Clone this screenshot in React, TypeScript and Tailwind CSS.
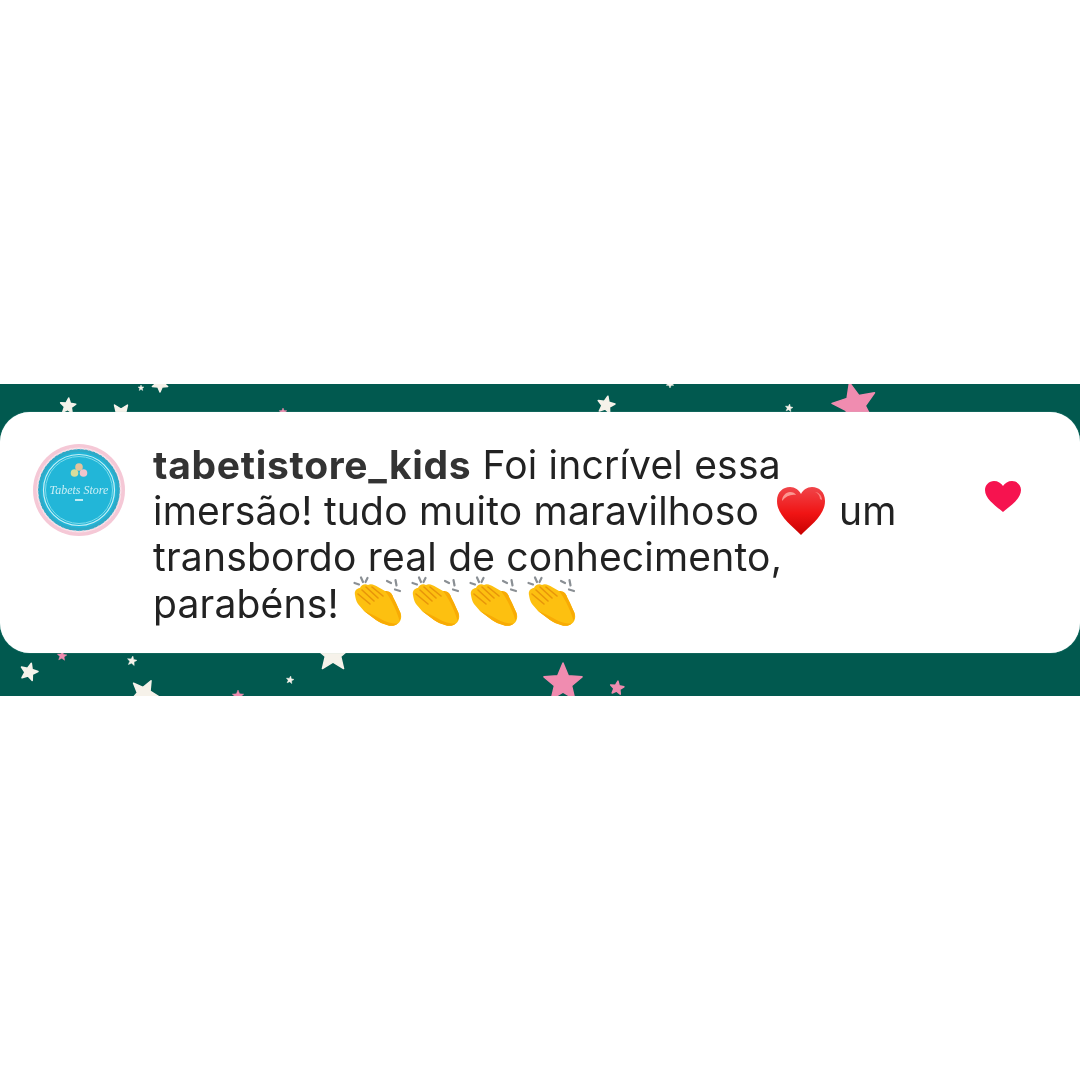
import React from "react";

const WHITE = "#f6f2ea";
const PINK = "#f08cb0";

// x, y, radius, rotation, colour - y is measured from the top of the band
const stars: [number, number, number, number, string][] = [
  [68, 22, 8, 5, WHITE],
  [160, 0, 8, 180, WHITE],
  [141, 4, 3, 0, WHITE],
  [121, 30, 11, 180, WHITE],
  [283, 28, 4, 0, PINK],
  [606, 21, 9, 12, WHITE],
  [670, 0, 4, 180, WHITE],
  [789, 24, 4, 10, WHITE],
  [855, 21, 23, -14, PINK],
  [29, 288, 9, 15, WHITE],
  [62, 272, 5, 5, PINK],
  [132, 277, 5, 10, WHITE],
  [333, 270, 18, 0, WHITE],
  [144, 310, 15, 172, WHITE],
  [290, 296, 4, 10, WHITE],
  [238, 312, 6, 0, PINK],
  [563, 299, 20, 0, PINK],
  [617, 304, 7, 8, PINK],
];

const starPoints = (cx: number, cy: number, r: number, rot: number) =>
  Array.from({ length: 10 }, (_, i) => {
    const rad = i % 2 === 0 ? r : r * 0.45;
    const a = ((i * 36 + rot - 90) * Math.PI) / 180;
    return `${cx + rad * Math.cos(a)},${cy + rad * Math.sin(a)}`;
  }).join(" ");

const Avatar = () => (
  <svg viewBox="0 0 92 92" className="w-[92px] h-[92px] shrink-0">
    <circle cx="46" cy="46" r="46" fill="#f5c8d6" />
    <circle cx="46" cy="46" r="42.5" fill="#f7e6ec" />
    <circle cx="46" cy="46" r="41" fill="#2fa9c6" />
    <circle cx="46" cy="46" r="41.5" fill="none" stroke="#f5d5e0" strokeWidth="1.5" strokeDasharray="1.5 2.5" />
    <circle cx="46" cy="46" r="38" fill="#22b6d8" />
    <circle cx="46" cy="46" r="35.5" fill="none" stroke="#c8f0f6" strokeWidth="1.2" />
    <circle cx="46" cy="46" r="33.5" fill="none" stroke="#7fdcec" strokeWidth="1" />
    <circle cx="46" cy="23" r="3.8" fill="#e6c39c" />
    <circle cx="41.5" cy="29" r="3.8" fill="#d8dd9c" />
    <circle cx="50.5" cy="29" r="3.8" fill="#f0c4cc" />
    <text x="46" y="50" textAnchor="middle" fontFamily="'Liberation Serif', serif" fontStyle="italic" fontSize="12" fill="#c9eef5">
      Tabets Store
    </text>
    <rect x="42" y="55" width="8" height="2" fill="#bdebf4" />
  </svg>
);

const Clap = () => (
  <svg viewBox="0 0 50 50" className="w-[50px] h-[50px] shrink-0 mr-[8px] -mt-[6px] blur-[0.4px]">
    <g stroke="#8a8f94" strokeWidth="2.2" strokeLinecap="round" fill="none">
      <path d="M2.5 7l4.5 1.5" />
      <path d="M9 1.5l2 4.5" />
      <path d="M15.5 2l-2 4" />
      <path d="M35 5l4 2" />
      <path d="M43.5 4l1 5.500" />
      <path d="M43 13.5l5 1.500" />
    </g>
    <path
      d="M3 19C2 15 5 12 8 12C9 9 13 7 16 9C19 7 23 9 26 11L33 15C37 15 40 17 41 21C42 23 43 25 44 27L48.5 37C50 41 49 45 46 47.5C43 50 39 50.5 35 49C31 48 27 46 24 44L12 35L6 28C4 25 3.5 22 3 19Z"
      fill="#fdc010"
    />
    <path d="M33 15C37 15 40 17 41 21C42 23 43 25 44 27L48.5 37C49 40 48.5 42 47.5 45C46 38 40 24 33 15Z" fill="#f8ab05" />
    <path d="M12 35L24 44C27 46 31 48 35 49C39 50.5 43 50 46 47.5C38 48 32 45 27 42C22 39 17 37 12 35Z" fill="#f8ab05" />
    <g stroke="#e8950a" strokeWidth="1.6" strokeLinecap="round" fill="none">
      <path d="M6 18L18 28" />
      <path d="M10 14L22 25" />
      <path d="M14 11L26 22" />
      <path d="M20 11L31 20" />
    </g>
  </svg>
);

const RedHeart = () => (
  <svg viewBox="0 0 48 48" className="w-[48px] h-[48px] shrink-0 ml-[18px] mr-[14px]">
    <defs>
      <linearGradient id="redHeart" x1="0" y1="0" x2="0" y2="1">
        <stop offset="0" stopColor="#f0454a" />
        <stop offset="0.55" stopColor="#f01414" />
        <stop offset="1" stopColor="#c80000" />
      </linearGradient>
    </defs>
    <path
      d="M24 48C14 38 0 28 0 14 0 5 6 0 13 0c5 0 9 3 11 7 2-4 6-7 11-7 7 0 13 5 13 14 0 14-14 24-24 34z"
      fill="url(#redHeart)"
    />
    <path d="M5 14c0-5 4-9 8-9 3 0 5 1 6 3-5-1-10 1-14 6z" fill="#ffb0a8" opacity="0.8" />
    <path d="M43 12c0-3-2-6-5-7 3 0 7 3 7 8z" fill="#ff9d96" opacity="0.8" />
  </svg>
);

const App = () => {
  return (
    <div className="min-h-[1080px] bg-white flex flex-col justify-center font-['Inter',sans-serif]">
      <section className="relative h-[312px] bg-[#01594f] pt-[28px] overflow-hidden">
        <svg viewBox="0 0 1080 312" className="absolute inset-0 w-full h-full blur-[0.5px]">
          {stars.map(([x, y, r, rot, color], i) => (
            <polygon key={i} points={starPoints(x, y, r, rot)} fill={color} strokeLinejoin="round" stroke={color} strokeWidth={r > 6 ? 1.5 : 0.5} />
          ))}
        </svg>
        <div className="relative h-[241px] bg-white rounded-[30px] shadow-[0_0_1px_#9fcfca] flex items-start pl-[33px] pt-[32px]">
          <div className="blur-[0.6px] shrink-0">
            <Avatar />
          </div>
          <div className="ml-[28px] -mt-[2px] text-[39px] leading-[46.2px] text-[#222222] tracking-[0.2px] flex-1 blur-[0.3px]">
            <div>
              <span className="font-bold text-[#333333] tracking-[0.7px]">tabetistore_kids</span> Foi incrível essa
            </div>
            <div className="flex items-center h-[46.2px]">
              imersão! tudo muito maravilhoso
              <RedHeart />
              um
            </div>
            <div>transbordo real de conhecimento,</div>
            <div className="flex items-center h-[46.2px]">
              <span className="mr-[13px]">parabéns!</span>
              <Clap />
              <Clap />
              <Clap />
              <Clap />
            </div>
          </div>
          <svg viewBox="0 0 36 31" className="w-[36px] h-[31px] shrink-0 mt-[37px] mr-[59px]">
            <path
              d="M18 31C11 25 0 18 0 9 0 4 4 0 9 0c4 0 7 2 9 5 2-3 5-5 9-5 5 0 9 4 9 9 0 9-11 16-18 22z"
              fill="#f6134f"
            />
          </svg>
        </div>
      </section>
    </div>
  );
};

export default App;
